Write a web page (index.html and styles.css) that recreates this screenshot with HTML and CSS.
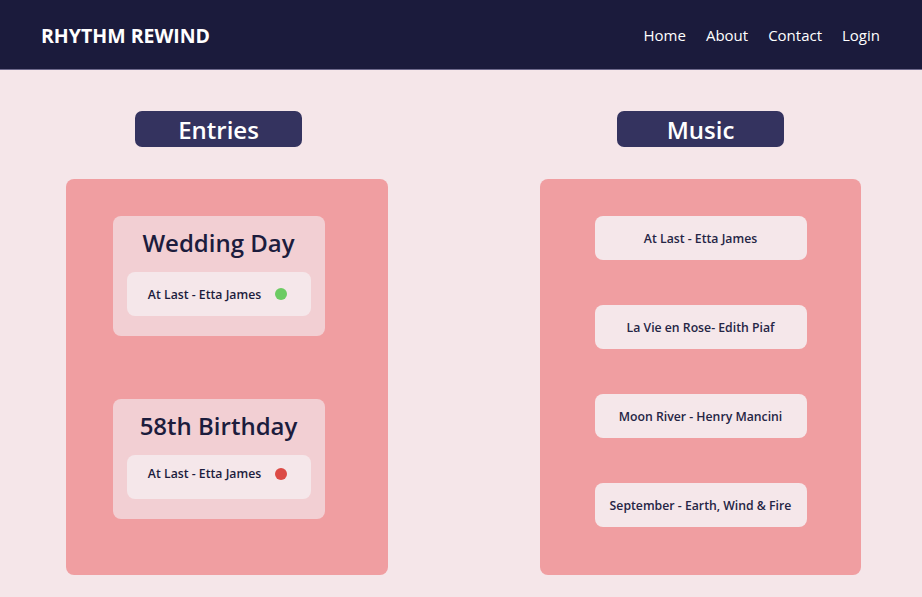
FILE: index.html
```html
<!DOCTYPE html>
<html lang="en">
<head>
<meta charset="utf-8">
<title>Rhythm Rewind</title>
<link rel="stylesheet" href="styles.css">
</head>
<body>
<header class="topbar">
  <div class="brand">RHYTHM REWIND</div>
  <nav class="nav">
    <a href="#">Home</a>
    <a href="#">About</a>
    <a href="#">Contact</a>
    <a href="#">Login</a>
  </nav>
</header>
<main class="main">
  <section class="column column-left">
    <div class="pill-wrap"><h2 class="pill">Entries</h2></div>
    <div class="panel">
      <div class="entry">
        <h3 class="entry-title">Wedding Day</h3>
        <div class="entry-row"><span class="song">At Last - Etta James</span><span class="dot dot-green"></span></div>
      </div>
      <div class="entry">
        <h3 class="entry-title">58th Birthday</h3>
        <div class="entry-row entry-row-raised"><span class="song">At Last - Etta James</span><span class="dot dot-red"></span></div>
      </div>
    </div>
  </section>
  <section class="column column-right">
    <div class="pill-wrap"><h2 class="pill">Music</h2></div>
    <div class="panel panel-music">
      <div class="track">At Last - Etta James</div>
      <div class="track">La Vie en Rose- Edith Piaf</div>
      <div class="track">Moon River - Henry Mancini</div>
      <div class="track">September - Earth, Wind &amp; Fire</div>
    </div>
  </section>
</main>
</body>
</html>
```

FILE: styles.css
```css
* { box-sizing: border-box; }
html, body { margin: 0; padding: 0; }
body {
  background: #f5e6e9;
  font-family: "Open Sans", "Noto Sans", sans-serif;
  color: #1c1c3d;
  width: 922px;
  height: 597px;
  overflow: hidden;
}
.topbar {
  height: 70px;
  background: #1b1b3c;
  display: flex;
  align-items: center;
  justify-content: space-between;
  padding: 2px 42px 0 41px;
  border-bottom: 1px solid #6e6a8c;
}
.brand {
  color: #fff;
  font-weight: 700;
  font-size: 19.5px;
}
.nav {
  display: flex;
  gap: 20px;
  margin-bottom: 2px;
}
.nav a {
  color: #fff;
  text-decoration: none;
  font-size: 15px;
}
.main {
  display: flex;
  padding: 41px 61px 0 66px;
  gap: 152px;
}
.column { display: flex; flex-direction: column; }
.column-left { width: 322px; }
.column-right { width: 321px; }
.pill-wrap {
  display: flex;
  justify-content: center;
  margin-bottom: 32px;
}
.column-left .pill-wrap { padding-right: 17px; }
.pill {
  margin: 0;
  width: 167px;
  height: 36px;
  background: #34335f;
  color: #fff;
  border-radius: 7px;
  font-size: 24px;
  font-weight: 600;
  line-height: 38px;
  text-align: center;
}
.panel {
  background: #f09ea1;
  border-radius: 8px;
  height: 396px;
  display: flex;
  flex-direction: column;
  align-items: center;
  padding-top: 37px;
}
.column-left .panel {
  padding-right: 17px;
  gap: 63px;
}
.panel-music { gap: 45px; }
.entry {
  width: 212px;
  height: 120px;
  background: #f2cfd3;
  border-radius: 8px;
  padding: 13px 14px 0 14px;
  display: flex;
  flex-direction: column;
  align-items: center;
}
.entry-title {
  margin: 0;
  font-size: 24px;
  font-weight: 600;
  line-height: 28px;
  margin-bottom: 15px;
  white-space: nowrap;
}
.entry-row {
  width: 184px;
  height: 44px;
  background: #f5e7ea;
  border-radius: 8px;
  display: flex;
  align-items: center;
  padding: 0 24px 0 19px;
  justify-content: space-between;
}
.entry-row-raised { padding-bottom: 7px; }
.song {
  font-size: 12.25px;
  font-weight: 600;
  width: 118px;
  text-align: center;
  white-space: nowrap;
}
.dot {
  width: 12px;
  height: 12px;
  border-radius: 50%;
}
.dot-green { background: #6ccb63; }
.dot-red { background: #dc4a45; }
.track {
  width: 212px;
  height: 44px;
  background: #f5e7ea;
  border-radius: 8px;
  display: flex;
  align-items: center;
  justify-content: center;
  font-size: 12.25px;
  font-weight: 600;
  color: #252545;
  white-space: nowrap;
}
```
